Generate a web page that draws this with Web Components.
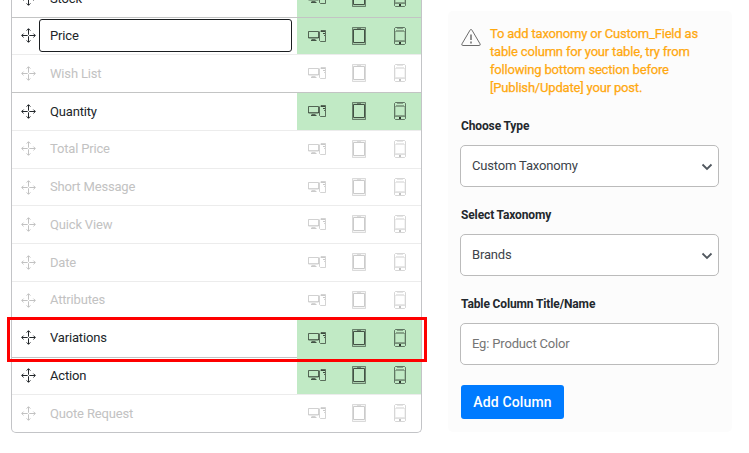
<!DOCTYPE html>
<html lang="en">
<head>
<meta charset="UTF-8">
<title>Column Settings</title>
<style>
  body {
    margin: 0;
    height: 453px;
    overflow: hidden;
    background: #fff;
    color: #212529;
    font-family: Roboto, "Liberation Sans", sans-serif;
    font-size: 13px;
    letter-spacing: -0.17px;
  }
</style>
</head>
<body>
<column-page>
  <column-list slot="list"></column-list>
  <add-column-panel slot="panel"></add-column-panel>
</column-page>

<script>
// Page layout: column list on the left, add form on the right
class ColumnPage extends HTMLElement {
  constructor() {
    super();
    this.attachShadow({ mode: 'open' });
  }

  connectedCallback() {
    this.shadowRoot.innerHTML = `
      <style>
        :host {
          display: grid;
          grid-template-columns: 411px 284px;
          column-gap: 26px;
          align-items: start;
          padding-left: 11px;
        }
      </style>
      <slot name="list"></slot>
      <slot name="panel"></slot>
    `;
  }
}
customElements.define('column-page', ColumnPage);

// Move handle
class MoveIcon extends HTMLElement {
  constructor() {
    super();
    this.attachShadow({ mode: 'open' });
  }

  connectedCallback() {
    this.shadowRoot.innerHTML = `
      <style>
        :host { display: block; width: 15px; height: 15px; }
        svg { display: block; fill: none; stroke: currentColor; stroke-width: 1; }
      </style>
      <svg width="15" height="15" viewBox="0 0 15 15">
        <path d="M7.5 .8v5.900M7.5 8.300v5.900M.8 7.5h5.900M8.300 7.5h5.900"/>
        <path d="M5.600 2.600l1.900-1.900 1.900 1.900M5.600 12.400l1.900 1.900 1.900-1.900M2.600 5.600l-1.900 1.900 1.900 1.900M12.400 5.600l1.900 1.900-1.900 1.900"/>
      </svg>
    `;
  }
}
customElements.define('move-icon', MoveIcon);

// Device icons: desktop, tablet, mobile
const DEVICES = {
  desktop: `
    <svg width="18" height="18" viewBox="0 0 18 18">
      <path d="M.5 4.500h10v6.500H.5z" opacity=".75"/>
      <path d="M1 10.500h10" opacity=".5"/>
      <path d="M3.500 12.500h4" opacity=".7"/>
      <path d="M3 13.500h5.500" opacity=".85"/>
      <path d="M12.500 14.500l-1-1v-8.500l1.500-1.500h4.500v11h-5z" opacity=".7"/>
      <path d="M13 4.500h4M15 6.500h2" opacity=".9"/>
      <path d="M16 8.500h1" opacity=".7"/>
    </svg>`,
  tablet: `
    <svg width="14" height="18" viewBox="0 0 14 18">
      <path d="M.5.5h13v17H.5z" opacity=".6"/>
      <path d="M1.5 2.5h11v13h-11z" opacity=".85"/>
      <path d="M1 1.500h12M1 16.500h12" opacity=".15"/>
      <path d="M5 1.5h4" opacity=".5"/>
    </svg>`,
  mobile: `
    <svg width="12" height="18" viewBox="0 0 12 18">
      <path d="M1.5.5h9l1 1v15l-1 1h-9l-1-1v-15z" opacity=".65"/>
      <path d="M3 1.5h6M2 3.500h8M1 4.500h10M1 13.500h10" opacity=".4"/>
      <path d="M1.500 5v8M10.500 5v8" opacity=".2"/>
      <path d="M1 14.500h10" opacity=".5"/>
      <path d="M5 16h2" stroke-width="2"/>
    </svg>`
};

class DeviceIcon extends HTMLElement {
  constructor() {
    super();
    this.attachShadow({ mode: 'open' });
  }

  connectedCallback() {
    this.shadowRoot.innerHTML = `
      <style>
        :host { display: block; }
        svg { display: block; fill: none; stroke: currentColor; stroke-width: 1; }
      </style>
      ${DEVICES[this.getAttribute('name')]}
    `;
  }
}
customElements.define('device-icon', DeviceIcon);

// One sortable row
class ColumnRow extends HTMLElement {
  constructor() {
    super();
    this.attachShadow({ mode: 'open' });
  }

  connectedCallback() {
    this.shadowRoot.innerHTML = `
      <style>
        :host {
          display: grid;
          grid-template-columns: 27px 258px 124px;
          box-sizing: border-box;
          border-bottom: 1px solid var(--line, #ececec);
          color: #212529;
          position: relative;
        }
        :host([off]) { color: #c2c2c2; }
        :host([last]) { border-bottom: 0; }
        move-icon { margin: var(--handle-top, 11px) 0 0 9px; }
        .name {
          display: flex;
          align-items: center;
          box-sizing: border-box;
          padding: 0 0 var(--name-bottom, 1px) 10px;
          border: 1px solid transparent;
        }
        :host([focused]) .name {
          border-color: #1b1e21;
          border-radius: 3px;
          margin: 1px 5px 2px 0;
          padding-bottom: 0;
        }
        .devices {
          display: grid;
          grid-template-columns: 40px 44px 38px;
          justify-items: center;
          align-items: start;
          box-sizing: border-box;
          padding-top: var(--icon-top, 9px);
        }
        :host(:not([off])) .devices { background: #c1eac5; color: #2d382e; }
        :host([highlight]) .devices { margin-bottom: -1px; }
        .mark {
          display: none;
          position: absolute;
          left: -5px;
          right: -6px;
          top: -2px;
          bottom: -5px;
          border: 3px solid #fe0000;
          z-index: 1;
        }
        :host([highlight]) .mark { display: block; }
      </style>
      <move-icon></move-icon>
      <div class="name"><slot></slot></div>
      <div class="devices">
        <device-icon name="desktop"></device-icon>
        <device-icon name="tablet"></device-icon>
        <device-icon name="mobile"></device-icon>
      </div>
      <div class="mark"></div>
    `;
  }
}
customElements.define('column-row', ColumnRow);

class ColumnList extends HTMLElement {
  constructor() {
    super();
    this.attachShadow({ mode: 'open' });
  }

  connectedCallback() {
    const rows = [
      { name: 'Stock', attrs: 'strong' },
      { name: 'Price', attrs: 'focused' },
      { name: 'Wish List', attrs: 'off strong' },
      { name: 'Quantity', attrs: '' },
      { name: 'Total Price', attrs: 'off raised' },
      { name: 'Short Message', attrs: 'off' },
      { name: 'Quick View', attrs: 'off' },
      { name: 'Date', attrs: 'off' },
      { name: 'Attributes', attrs: 'off strong' },
      { name: 'Variations', attrs: 'strong highlight' },
      { name: 'Action', attrs: 'tight' },
      { name: 'Quote Request', attrs: 'off last' }
    ];

    this.shadowRoot.innerHTML = `
      <style>
        :host {
          display: grid;
          grid-template-rows: 38px 37px 38px 38px 38px 37px 38px 38px 37px 39px 37px 37px;
          box-sizing: border-box;
          margin-top: -20px;
          border: 1px solid #c3c4c7;
          border-top: 0;
          border-radius: 0 0 5px 5px;
        }
        column-row[strong] { --line: #c3c4c4; }
        column-row[focused] { --handle-top: 10px; }
        column-row[highlight] { --icon-top: 10px; }
        column-row[raised] { --name-bottom: 3px; --handle-top: 10px; }
        column-row[tight] { --icon-top: 8px; --handle-top: 10px; }
      </style>
      ${rows.map(row => `<column-row ${row.attrs}>${row.name}</column-row>`).join('')}
    `;
  }
}
customElements.define('column-list', ColumnList);

// Labelled field; type is "select" or "input"
class FormField extends HTMLElement {
  constructor() {
    super();
    this.attachShadow({ mode: 'open' });
  }

  connectedCallback() {
    const isSelect = this.getAttribute('type') === 'select';

    this.shadowRoot.innerHTML = `
      <style>
        :host { display: block; height: 89px; }
        .label {
          font-size: 12px;
          font-weight: 700;
          line-height: 16px;
          letter-spacing: -0.13px;
          padding: 0 0 11px 1px;
          color: #23282d;
        }
        .box {
          display: flex;
          align-items: center;
          justify-content: space-between;
          box-sizing: border-box;
          width: 259px;
          height: 42px;
          padding: 0 5px 1px 11px;
          border: 1px solid #bbb;
          border-radius: 5px;
          background: #fff;
          color: #3c434a;
        }
        .box.input { color: #757575; }
        svg { margin-top: 3px; fill: none; stroke: #50575e; stroke-width: 1.8; }
      </style>
      <div class="label">${this.getAttribute('label')}</div>
      <div class="box ${isSelect ? 'select' : 'input'}">
        <slot></slot>
        ${isSelect ? '<svg width="12" height="8" viewBox="0 0 12 8"><path d="M1.5 1.5L6 6l4.500-4.500"/></svg>' : ''}
      </div>
    `;
  }
}
customElements.define('form-field', FormField);

class AddColumnPanel extends HTMLElement {
  constructor() {
    super();
    this.attachShadow({ mode: 'open' });
  }

  connectedCallback() {
    this.shadowRoot.innerHTML = `
      <style>
        :host {
          display: block;
          box-sizing: border-box;
          height: 421px;
          margin-top: 11px;
          padding: 14px 12px 0;
          border-radius: 5px;
          background: #fcfcfc;
        }
        .notice {
          display: flex;
          gap: 9px;
          height: 93px;
          color: #ffa80f;
          font-size: 13px;
          line-height: 18px;
          letter-spacing: -0.18px;
          -webkit-text-stroke: 0.25px;
          white-space: nowrap;
        }
        .notice svg { flex: none; margin: 3px 0 0 1px; fill: none; stroke: #6c6c6c; }
        button {
          display: block;
          margin: 0 0 0 1px;
          width: 103px;
          height: 34px;
          padding: 0;
          border: 0;
          border-radius: 3px;
          background: #007bff;
          color: #fff;
          font: 500 14px/34px Roboto, "Liberation Sans", sans-serif;
          letter-spacing: 0.15px;
        }
      </style>
      <div class="notice">
        <svg width="20" height="19" viewBox="0 0 20 19">
          <path d="M10 1.500Q10.700 1.500 11 2.200L19 15.800Q19.700 17.500 18.300 17.500H1.700Q.3 17.500 1 15.800L9 2.200Q9.300 1.500 10 1.500z"/>
          <path d="M10 6.500v5.500M10 13.500v2" stroke-width="1.500"/>
        </svg>
        <div>To add taxonomy or Custom_Field as<br>table column for your table, try from<br>following bottom section before<br>[Publish/Update] your post.</div>
      </div>
      <form-field type="select" label="Choose Type">Custom Taxonomy</form-field>
      <form-field type="select" label="Select Taxonomy">Brands</form-field>
      <form-field type="input" label="Table Column Title/Name">Eg: Product Color</form-field>
      <button>Add Column</button>
    `;
  }
}
customElements.define('add-column-panel', AddColumnPanel);
</script>
</body>
</html>
